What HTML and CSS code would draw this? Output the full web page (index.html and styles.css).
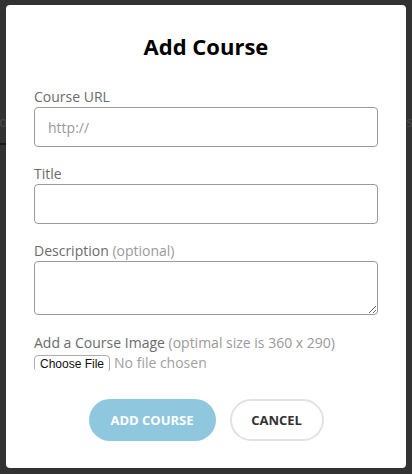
FILE: index.html
```html
<!DOCTYPE html>
<html lang="en">
<head>
  <meta charset="UTF-8" />
  <meta name="viewport" content="width=device-width, initial-scale=1.0" />
  <title>Add Course</title>
  <link rel="stylesheet" href="styles.css">
</head>
<body>
  <div class="page">
    <div class="tabs">
      <span class="tab active">o</span>
      <span class="tab">s</span>
    </div>
  </div>

  <div class="overlay">
    <form class="modal" id="course-form">
      <h2>Add Course</h2>

      <label for="url">Course URL</label>
      <input type="text" id="url" name="url" placeholder="http://" />

      <label for="title">Title</label>
      <input type="text" id="title" name="title" />

      <label for="desc">Description <span class="hint">(optional)</span></label>
      <textarea id="desc" name="desc"></textarea>

      <label for="image">Add a Course Image <span class="hint">(optimal size is 360 x 290)</span></label>
      <input type="file" id="image" name="image" class="file" />

      <div class="actions">
        <button type="submit" class="btn primary">Add Course</button>
        <button type="button" class="btn secondary">Cancel</button>
      </div>
    </form>
  </div>
</body>
</html>
```

FILE: styles.css
```css
body {
  margin: 0;
  font-family: "Open Sans", sans-serif;
  background-color: #3b3b3b;
  height: 474px;
  overflow: hidden;
}
.page {
  padding-top: 110px;
}
.tabs {
  display: flex;
  justify-content: space-between;
  height: 35px;
}
.tab {
  font-size: 14px;
  line-height: 24px;
  color: #555;
}
.tab.active {
  width: 7px;
  height: 33px;
  border-bottom: 2px solid #1c1c1c;
  margin-left: -1px;
}
.tab:last-child {
  margin-right: -1px;
}
.overlay {
  position: absolute;
  top: 0;
  left: 0;
  right: 0;
  bottom: 0;
  background: rgba(0, 0, 0, 0.15);
}
.modal {
  position: absolute;
  top: 5px;
  left: 6px;
  width: 400px;
  height: 463px;
  box-sizing: border-box;
  padding: 26px 28px 0;
  background: #fff;
  border-radius: 4px;
  display: flex;
  flex-direction: column;
}
h2 {
  margin: 0 0 26px;
  font-size: 22px;
  line-height: 30px;
  font-weight: 700;
  text-align: center;
  color: #000;
}
label {
  font-size: 14px;
  line-height: 20px;
  color: #6b6b6b;
}
.hint {
  color: #9a9a9a;
}
input, textarea {
  font-family: "Open Sans", sans-serif;
  font-size: 14px;
  color: #333;
  border: 1px solid #9a9a9a;
  border-radius: 4px;
  box-sizing: border-box;
  width: 344px;
  margin: 0 0 17px;
}
input {
  height: 40px;
  padding: 0 13px;
}
textarea {
  height: 54px;
  padding: 8px 13px;
  resize: vertical;
  margin-bottom: 18px;
}
input::placeholder {
  color: #999;
}
.file {
  border: none;
  height: 18px;
  padding: 0;
  color: #a0a0a0;
  margin-bottom: 28px;
}
.file::file-selector-button {
  font-family: "Liberation Sans", Arial, sans-serif;
  font-size: 12px;
  height: 18px;
  padding: 0 5px;
  margin-right: 4px;
  color: #111;
  background: #fff;
  border: 1px solid #adadad;
  border-radius: 4px;
}
.actions {
  display: flex;
  justify-content: center;
  gap: 14px;
}
.btn {
  height: 42px;
  border-radius: 21px;
  font-family: "Open Sans", sans-serif;
  font-size: 13px;
  font-weight: 700;
  text-transform: uppercase;
  cursor: pointer;
}
.primary {
  width: 127px;
  background-color: #8ec7de;
  color: #fff;
  border: none;
}
.secondary {
  width: 94px;
  background-color: #fff;
  color: #333;
  border: 2px solid #e2e2e2;
}
```
